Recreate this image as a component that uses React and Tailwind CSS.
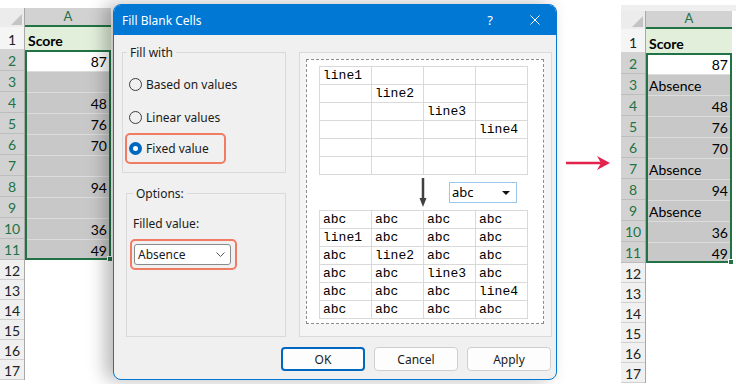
import React from 'react';

const leftValues = ['87', '', '48', '76', '70', '', '94', '', '36', '49'];
const rightValues = ['87', 'Absence', '48', '76', '70', 'Absence', '94', 'Absence', '36', '49'];

const topGrid = [0, 1, 2, 3, 4, 5].map((r) => [0, 1, 2, 3].map((c) => (r < 4 && r === c ? `line${r + 1}` : '')));
const bottomGrid = [0, 1, 2, 3, 4, 5].map((r) =>
  [0, 1, 2, 3].map((c) => (r >= 1 && r <= 4 && c === r - 1 ? `line${r}` : 'abc'))
);

const Sheet = ({ values, headerClass, row1Class }) => (
  <div className="flex">
    {/* row numbers */}
    <div className="w-[25px] flex flex-col border-r border-[#a8a8a8]">
      <div className={`${headerClass} bg-[#ececec] flex items-end justify-end pr-[2px] pb-[2px]`}>
        <svg width="11" height="11" viewBox="0 0 11 11">
          <polygon points="11,0 11,11 0,11" fill="#c4c4c4" />
        </svg>
      </div>
      <div className={`${row1Class} bg-[#f5f5f5] border-b border-[#d4d4d4] flex items-end justify-center pb-[1px] leading-[17px] text-[#222]`}>
        1
      </div>
      {values.map((_, i) => (
        <div
          key={i}
          className="h-[21px] bg-[#d2d2d2] border-b border-[#bdbdbd] flex items-end justify-center pb-[1px] leading-[17px] text-[#217346]"
        >
          {i + 2}
        </div>
      ))}
      {[12, 13, 14, 15, 16, 17].map((n) => (
        <div
          key={n}
          className="h-[20px] bg-[#f0f0f0] border-b border-[#d0d0d0] flex items-end justify-center leading-[17px] text-[#222]"
        >
          {n}
        </div>
      ))}
    </div>

    {/* column A */}
    <div className="w-[86px] flex flex-col">
      <div className={`${headerClass} bg-[#d2d2d2] border-b-2 border-[#217346] flex items-center justify-center text-[13px] text-[#217346]`}>
        A
      </div>
      <div className={`${row1Class} bg-[#e2efda] flex items-end pl-[3px] pb-[1px] leading-[17px] font-bold`}>Score</div>
      <div className="relative outline-2 outline-[#217346] -outline-offset-2">
        {values.map((v, i) => (
          <div
            key={i}
            className={`h-[21px] flex items-end pb-[1px] leading-[17px] ${
              i === 0 ? 'bg-white' : 'bg-[#c8c8c8] border-t border-[#dcdcdc]'
            } ${isNaN(Number(v)) ? 'pl-[3px]' : 'justify-end pr-[4px]'}`}
          >
            {v}
          </div>
        ))}
        <span className="absolute -bottom-[2px] -right-[2px] w-[6px] h-[6px] bg-[#217346] border border-white" />
      </div>
      {[12, 13, 14, 15, 16, 17].map((n) => (
        <div key={n} className="h-[20px] bg-white" />
      ))}
    </div>
  </div>
);

const Radio = ({ label, checked }) => (
  <div className="flex items-center h-[20px] gap-[4px]">
    {checked ? (
      <span className="w-[13px] h-[13px] rounded-full bg-[#0067c0] flex items-center justify-center">
        <span className="w-[5px] h-[5px] rounded-full bg-white" />
      </span>
    ) : (
      <span className="w-[13px] h-[13px] rounded-full border border-[#3c3c3c]" />
    )}
    <span>{label}</span>
  </div>
);

const Grid = ({ rows }) => (
  <div className="grid grid-cols-[repeat(4,52px)] w-fit border-l border-t border-[#d9d9d9] font-['Liberation_Mono',monospace] text-[13px] leading-[17px] text-black">
    {rows.flat().map((t, i) => (
      <div key={i} className="h-[18px] border-r border-b border-[#d9d9d9] pl-[3px]">
        {t}
      </div>
    ))}
  </div>
);

const Dialog = () => (
  <div className="relative z-10 mt-[4px] w-[444px] h-[376px] shrink-0 flex flex-col overflow-hidden rounded-[8px] border border-[#0078d4] bg-[#f0f0f0] shadow-[-8px_0_18px_rgba(0,0,0,0.28)] font-['Noto_Sans',sans-serif] text-[12px] leading-[17px] text-[#1b1b1b]">
    <div className="h-[30px] shrink-0 bg-[#0078d4] flex items-center pl-[8px] text-white">
      <span>Fill Blank Cells</span>
      <span className="ml-auto text-[13px]">?</span>
      <svg className="ml-[37px] mr-[16px]" width="10" height="10" viewBox="0 0 10 10">
        <path d="M0.5 0.5L9.5 9.5M9.5 0.5L0.5 9.5" stroke="white" strokeWidth="1" />
      </svg>
    </div>

    <div className="flex pt-[17px]">
      <div className="ml-[8px] w-[164px] flex flex-col">
        {/* Fill with */}
        <div className="relative h-[121px] border border-[#d9d9d9] flex flex-col pt-[21px] pl-[6px]">
          <span className="absolute -top-[9px] left-[4px] px-[3px] bg-[#f0f0f0]">Fill with</span>
          <Radio label="Based on values" />
          <div className="mt-[13px]">
            <Radio label="Linear values" />
          </div>
          <div className="mt-[6px] -ml-[4px] w-[101px] h-[31px] border-2 border-[#f07c64] rounded-[5px] flex items-center pl-[2px]">
            <Radio label="Fixed value" checked />
          </div>
        </div>

        {/* Options */}
        <div className="relative mt-[20px] ml-[4px] h-[144px] border border-[#d9d9d9] pt-[21px] pl-[6px]">
          <span className="absolute -top-[9px] left-[6px] px-[3px] bg-[#f0f0f0]">Options:</span>
          <div>Filled value:</div>
          <div className="mt-[7px] -ml-[3px] w-[107px] h-[31px] border-2 border-[#f07c64] rounded-[5px] flex items-center pl-[2px]">
            <div className="w-[97px] h-[21px] bg-white border border-[#8a8a8a] rounded-[3px] flex items-center pl-[3px] pr-[5px]">
              <span>Absence</span>
              <svg className="ml-auto" width="9" height="5" viewBox="0 0 9 5">
                <polyline points="0.5,0.5 4.5,4.5 8.5,0.5" fill="none" stroke="#555" strokeWidth="1" />
              </svg>
            </div>
          </div>
        </div>
      </div>

      {/* Preview */}
      <div className="ml-[13px] w-[253px] h-[285px] border border-[#dadada] bg-[#f5f5f5]">
        <div className="ml-[6px] mt-[6px] w-[238px] h-[265px] border border-dashed border-[#8c8c8c] bg-white pl-[12px] pt-[6px]">
          <Grid rows={topGrid} />
          <div className="h-[35px] flex items-start">
            <svg className="ml-[99px] mt-[3px]" width="10" height="29" viewBox="0 0 10 29">
              <line x1="5" y1="0" x2="5" y2="22" stroke="#404040" strokeWidth="2.5" />
              <polygon points="1.5,20 8.5,20 5,29" fill="#404040" />
            </svg>
            <div className="ml-[21px] mt-[7px] w-[68px] h-[21px] border border-[#9cc6ea] bg-white flex items-center pl-[2px] pr-[6px] text-[13px] text-black">
              <span>abc</span>
              <svg className="ml-auto" width="8" height="4" viewBox="0 0 8 4">
                <polygon points="0,0 8,0 4,4" fill="#111" />
              </svg>
            </div>
          </div>
          <Grid rows={bottomGrid} />
        </div>
      </div>
    </div>

    <div className="flex justify-end gap-[9px] pr-[5px] mt-[10px]">
      <button className="w-[84px] h-[24px] rounded-[4px] border-2 border-[#0067c0] bg-[#fdfdfd] flex items-center justify-center">
        OK
      </button>
      <button className="w-[84px] h-[24px] rounded-[4px] border border-[#cfcfcf] bg-[#fdfdfd] flex items-center justify-center">
        Cancel
      </button>
      <button className="w-[84px] h-[24px] rounded-[4px] border border-[#cfcfcf] bg-[#fdfdfd] flex items-center justify-center">
        Apply
      </button>
    </div>
  </div>
);

export default function App() {
  return (
    <div className="w-[736px] h-[384px] bg-white flex overflow-hidden font-['Lato',sans-serif] text-[14px] text-black">
      <div className="w-[113px] shrink-0 pt-[8px]">
        <Sheet values={leftValues} headerClass="h-[19px]" row1Class="h-[23px]" />
      </div>

      <Dialog />

      <div className="w-[64px] shrink-0 pt-[155px] pl-[9px]">
        <svg width="46" height="16" viewBox="0 0 46 16">
          <line x1="0" y1="8" x2="37" y2="8" stroke="#e3234d" strokeWidth="2.5" />
          <polygon points="44,8 31,1 35,8 31,15" fill="#e3234d" />
        </svg>
      </div>

      <div className="w-[115px] shrink-0 pt-[5px]">
        <div className="h-[6px] bg-[#efefef]" />
        <Sheet values={rightValues} headerClass="h-[18px]" row1Class="h-[24px]" />
      </div>
    </div>
  );
}
